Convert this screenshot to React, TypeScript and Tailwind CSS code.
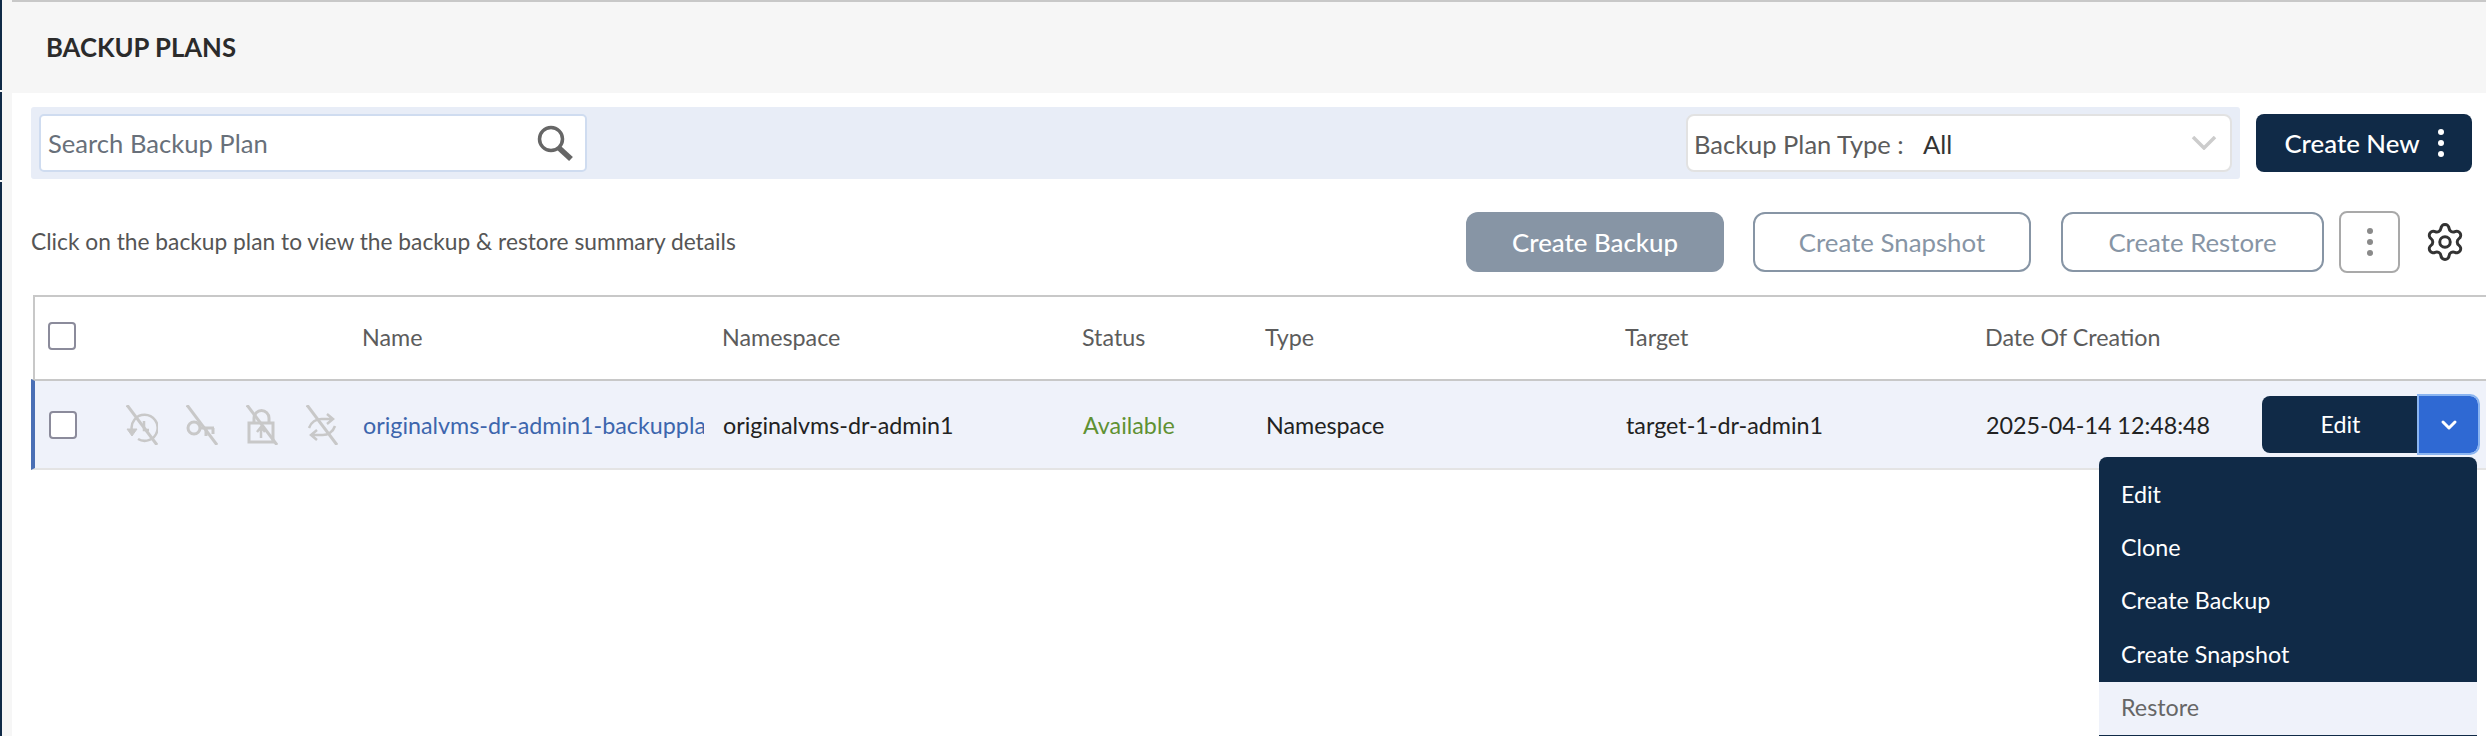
import { ChevronDown, Settings } from "lucide-react";

const menuItems = ["Edit", "Clone", "Create Backup", "Create Snapshot"];

const columns = "grid grid-cols-[314px_360px_360px_183px_360px_360px_276px_225px]";

function Kebab({ className }: { className: string }) {
  return (
    <span className="flex flex-col items-center gap-[5px]">
      <span className={`size-[6px] rounded-full ${className}`} />
      <span className={`size-[6px] rounded-full ${className}`} />
      <span className={`size-[6px] rounded-full ${className}`} />
    </span>
  );
}

function StatusIcon({ children }: { children: React.ReactNode }) {
  return (
    <svg width="32" height="40" viewBox="0 0 32 40" fill="none" stroke="#c8c8c8" strokeWidth="3">
      {children}
      <path d="M1 0 L31 40" />
    </svg>
  );
}

function CheckBox({ filled }: { filled?: boolean }) {
  return <span className={`block size-[28px] rounded-[4px] border-2 border-[#8b8b9b] ${filled ? "bg-white" : ""}`} />;
}

export default function App() {
  return (
    <div className="flex h-[736px] overflow-hidden bg-white font-['Lato',sans-serif] text-[23.3px] text-[#333]">
      <div className="flex w-[12px] shrink-0 bg-[#f6f6f6]">
        <div className="flex w-[2px] flex-col gap-[2px]">
          <div className="h-[90px] bg-[#102a47]" />
          <div className="h-[88px] bg-[#102a47]" />
          <div className="flex-1 bg-[#102a47]" />
        </div>
      </div>

      <div className="min-w-0 flex-1">
        <header className="flex h-[93px] items-center border-t-2 border-[#c8c8c8] bg-[#f6f6f6] pl-[34px]">
          <h1 className="-mt-[1px] text-[25.7px] font-bold text-[#2b2b2b]">BACKUP PLANS</h1>
        </header>

        <div className="mt-[14px] flex items-center pl-[19px] pr-[14px]">
          <div className="flex h-[72px] flex-1 items-center justify-between rounded-[3px] bg-[#e8edf7] pl-[8px] pr-[8px]">
            <div className="flex h-[58px] w-[548px] items-center justify-between rounded-[5px] border-2 border-[#cfdcf0] bg-white pl-[7px] pr-[11px]">
              <span className="text-[25.6px] text-[#68707a]">Search Backup Plan</span>
              <svg width="38" height="36" viewBox="0 0 38 36" fill="none" stroke="#666">
                <circle cx="15" cy="14" r="11.5" strokeWidth="3.5" />
                <path d="M23 23 L35 34" strokeWidth="5.5" />
              </svg>
            </div>
            <div className="flex h-[58px] w-[546px] items-center rounded-[8px] border-2 border-[#e2e2e2] bg-white pl-[6px] pr-[13px]">
              <span className="mt-[2px] w-[229px] text-[25.5px] text-[#5c5c5c]">Backup Plan Type :</span>
              <span className="mt-[2px] flex-1 text-[25.5px] text-[#333]">All</span>
              <svg width="26" height="14" viewBox="0 0 26 14" fill="none" stroke="#cccccc" strokeWidth="3.5">
                <path d="M2 1 L13 12 L24 1" />
              </svg>
            </div>
          </div>
          <button className="ml-[16px] flex h-[58px] w-[216px] items-center justify-center gap-[18px] rounded-[8px] bg-[#102a47] text-[25.8px] font-medium text-white">
            Create New
            <Kebab className="bg-white" />
          </button>
        </div>

        <div className="mt-[32px] flex h-[62px] items-center pl-[19px] pr-[20px]">
          <p className="flex-1 text-[22.75px] text-[#555]">Click on the backup plan to view the backup &amp; restore summary details</p>
          <button className="h-[60px] w-[258px] rounded-[12px] bg-[#8795a5] text-[25.8px] font-medium text-white">Create Backup</button>
          <button className="ml-[29px] h-[60px] w-[278px] rounded-[12px] border-2 border-[#8795a5] bg-white text-[25.8px] text-[#8795a5]">Create Snapshot</button>
          <button className="ml-[30px] h-[60px] w-[263px] rounded-[12px] border-2 border-[#8795a5] bg-white text-[25.8px] text-[#8795a5]">Create Restore</button>
          <button className="ml-[15px] flex h-[62px] w-[61px] items-center justify-center rounded-[8px] border-2 border-[#a9a9a9] bg-white">
            <Kebab className="bg-[#8a8a8a]" />
          </button>
          <Settings className="ml-[24px] text-[#333]" size={42} strokeWidth={1.7} />
        </div>

        <div className="relative mt-[22px] pl-[19px]">
          <div className={`${columns} ml-[2px] h-[84px] items-center border-t-2 border-l-2 border-[#c8c8c8] pl-[13px] pb-[2px] text-[#5c5c5c]`}>
            <div className="-mt-[2px]"><CheckBox /></div>
            <div>Name</div>
            <div>Namespace</div>
            <div>Status</div>
            <div>Type</div>
            <div>Target</div>
            <div>Date Of Creation</div>
            <div />
          </div>
          <div className={`${columns} h-[91px] items-center border-y-2 border-t-[#c8c8c8] border-b-[#e4e4e4] border-l-4 border-l-[#4a6fb5] bg-[#eff2fa] pl-[14px] text-[#222]`}>
            <div className="flex items-center">
              <CheckBox filled />
              <div className="ml-[49px] flex gap-[28px]">
                <StatusIcon>
                  <path d="M6 26 A13 13 0 1 1 12 34" strokeWidth="2.5" />
                  <path d="M1 24 L11 24 L6 31 Z" fill="#c8c8c8" strokeWidth="1" />
                  <path d="M18 16 V25 L23 25" strokeWidth="2.5" />
                </StatusIcon>
                <StatusIcon>
                  <circle cx="8" cy="23" r="6" />
                  <path d="M14 23 H28 M20 23 V31 M27 23 V29" />
                </StatusIcon>
                <StatusIcon>
                  <rect x="3" y="18" width="24" height="19" />
                  <path d="M8 17 V13 A7.5 7.5 0 0 1 23 13 V17" />
                  <path d="M15 33 V24 M11 27 L15 22 L19 27" strokeWidth="2.5" />
                </StatusIcon>
                <StatusIcon>
                  <path d="M3 23 A13 13 0 0 1 16 14 H26 M21 9 L27 14 L21 19" strokeWidth="2.5" />
                  <path d="M29 21 A13 13 0 0 1 16 30 H6 M11 25 L5 30 L11 35" strokeWidth="2.5" />
                </StatusIcon>
              </div>
            </div>
            <div className="mt-[1px] w-[341px] overflow-hidden whitespace-nowrap text-[#3d66ad]">originalvms-dr-admin1-backupplan</div>
            <div className="mt-[1px]">originalvms-dr-admin1</div>
            <div className="mt-[1px] text-[#5f9132]">Available</div>
            <div className="mt-[1px]">Namespace</div>
            <div className="mt-[1px]">target-1-dr-admin1</div>
            <div className="mt-[1px]">2025-04-14 12:48:48</div>
            <div className="flex h-[57px] w-[216px]">
              <button className="flex w-[157px] items-center justify-center rounded-l-[8px] bg-[#102a47] text-white">Edit</button>
              <button className="flex w-[59px] items-center justify-center rounded-r-[8px] bg-[#2f69d3] text-white outline-2 outline-[#8ab4f0]">
                <ChevronDown size={24} strokeWidth={3} />
              </button>
            </div>
          </div>

          <ul className="absolute right-[9px] top-[162px] w-[378px] overflow-hidden rounded-t-[8px] border-b border-[#102a47] bg-[#102a47] pt-[12px] text-white">
            {menuItems.map((item) => (
              <li key={item} className="flex h-[53.3px] items-center pb-[3px] pl-[22px]">{item}</li>
            ))}
            <li className="flex h-[53.3px] items-center bg-[#eff2fa] pb-[3px] pl-[22px] text-[#666]">Restore</li>
          </ul>
        </div>
      </div>
    </div>
  );
}
